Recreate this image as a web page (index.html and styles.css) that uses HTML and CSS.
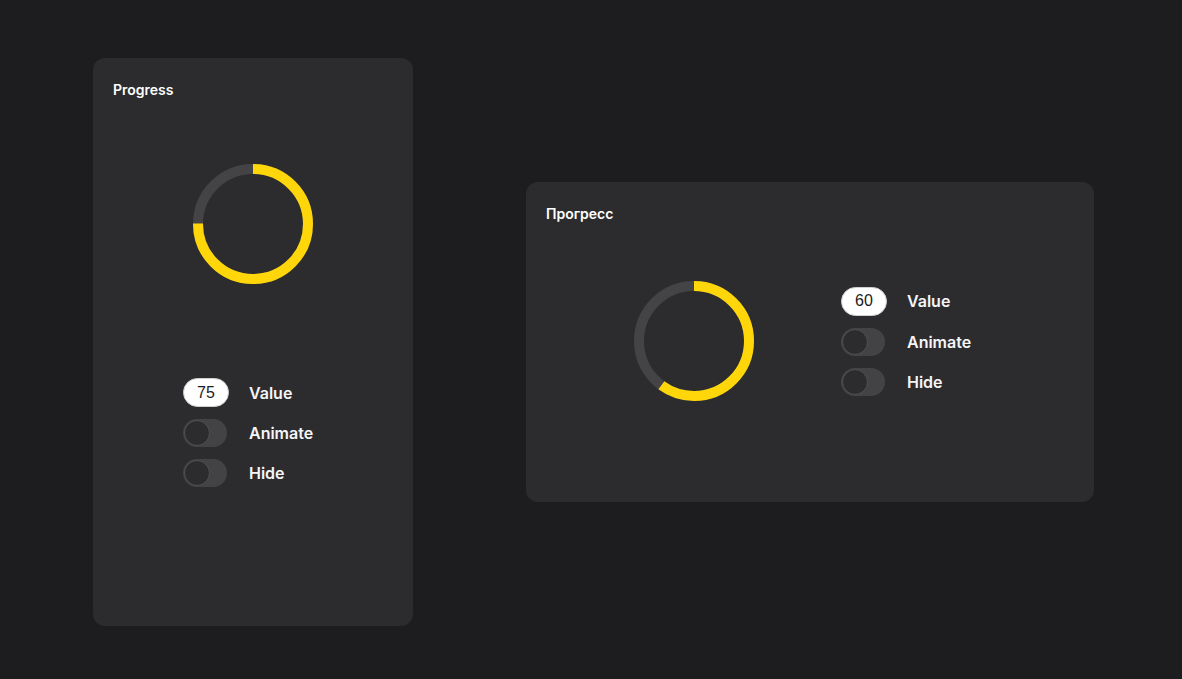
FILE: index.html
```html
<!DOCTYPE html>
<html>
<head>
<meta charset="utf-8">
<link rel="stylesheet" href="styles.css">
</head>
<body>
<div class="stage">
  <section class="card card-tall">
    <h2 class="card-title">Progress</h2>
    <div class="card-body body-col">
      <svg class="ring" width="120" height="120" viewBox="0 0 120 120">
        <circle class="ring-track" cx="60" cy="60" r="55"/>
        <circle class="ring-bar" cx="60" cy="60" r="55" stroke-dasharray="259.18 345.58" transform="rotate(-90 60 60)"/>
      </svg>
      <div class="controls">
        <div class="row"><div class="num">75</div><span class="label">Value</span></div>
        <div class="row"><div class="toggle"><div class="knob"></div></div><span class="label">Animate</span></div>
        <div class="row"><div class="toggle"><div class="knob"></div></div><span class="label">Hide</span></div>
      </div>
    </div>
  </section>
  <section class="card card-wide">
    <h2 class="card-title">Прогресс</h2>
    <div class="card-body body-row">
      <svg class="ring" width="120" height="120" viewBox="0 0 120 120">
        <circle class="ring-track" cx="60" cy="60" r="55"/>
        <circle class="ring-bar" cx="60" cy="60" r="55" stroke-dasharray="207.35 345.58" transform="rotate(-90 60 60)"/>
      </svg>
      <div class="controls">
        <div class="row"><div class="num">60</div><span class="label">Value</span></div>
        <div class="row"><div class="toggle"><div class="knob"></div></div><span class="label">Animate</span></div>
        <div class="row"><div class="toggle"><div class="knob"></div></div><span class="label">Hide</span></div>
      </div>
    </div>
  </section>
</div>
</body>
</html>
```
FILE: styles.css
```css
html, body {
  margin: 0;
  padding: 0;
  background: #1d1d1f;
  font-family: Inter, "Noto Sans", sans-serif;
  color: #f5f5f7;
}
.stage {
  display: flex;
  align-items: flex-start;
  padding: 58px 0 0 93px;
  gap: 113px;
  height: 679px;
  box-sizing: border-box;
}
.card {
  background: #2c2c2e;
  border-radius: 12px;
  padding: 24px 20px;
  box-sizing: border-box;
  display: flex;
  flex-direction: column;
}
.card-tall { width: 320px; height: 568px; }
.card-wide { width: 568px; height: 320px; margin-top: 124px; }
.card-title {
  margin: 0;
  font-size: 14px;
  line-height: 16px;
  font-weight: 600;
  color: #ffffff;
}
.card-body { display: flex; }
.body-col {
  flex-direction: column;
  align-items: center;
  padding-top: 66px;
}
.body-col .controls { margin-top: 94px; }
.body-row {
  flex-direction: row;
  align-items: center;
  padding-top: 59px;
  padding-left: 88px;
}
.body-row .controls { margin-left: 87px; margin-top: 0; }
.ring { display: block; flex: none; }
.ring-track { fill: none; stroke: #444446; stroke-width: 10; }
.ring-bar { fill: none; stroke: #ffd60a; stroke-width: 10; }
.controls {
  width: 140px;
  display: flex;
  flex-direction: column;
  gap: 12px;
}
.row {
  display: flex;
  align-items: center;
  gap: 22px;
}
.num {
  width: 46px;
  height: 29px;
  box-sizing: border-box;
  background: #ffffff;
  border-radius: 15px;
  border: 1px solid #d0d0d0;
  color: #1c1c1e;
  font-family: "Liberation Sans", Arial, sans-serif;
  font-size: 16px;
  display: flex;
  align-items: center;
  justify-content: center;
  margin-right: -2px;
}
.toggle {
  width: 44px;
  height: 28px;
  border-radius: 14px;
  background: #434345;
  position: relative;
  flex: none;
}
.knob {
  position: absolute;
  left: 1px;
  top: 1px;
  width: 26px;
  height: 26px;
  box-sizing: border-box;
  border-radius: 50%;
  background: #2c2c2e;
  border: 1px solid #505052;
}
.label {
  font-size: 16px;
  line-height: 20px;
  font-weight: 600;
  color: #f5f5f7;
}
```
